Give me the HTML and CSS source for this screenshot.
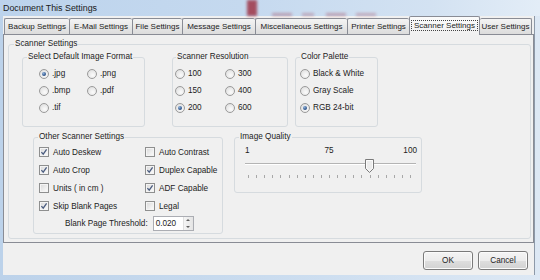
FILE: index.html
```html
<!DOCTYPE html>
<html>
<head>
<meta charset="utf-8">
<title>Document This Settings</title>
<link rel="stylesheet" href="styles.css">
</head>
<body>
<div class="window">
  <div class="titlebar">
    <span class="title">Document This Settings</span>
    <span class="smudge s1"></span>
    <span class="smudge s2"></span>
    <span class="smudge s3"></span>
    <span class="smudge s4"></span>
    <span class="smudge s5"></span>
  </div>
  <div class="client">
    <div class="tabs">
      <div class="tab w1">Backup Settings</div>
      <div class="tab w2">E-Mail Settings</div>
      <div class="tab w3">File Settings</div>
      <div class="tab w4">Message Settings</div>
      <div class="tab w5">Miscellaneous Settings</div>
      <div class="tab w6">Printer Settings</div>
      <div class="tab sel w7"><span class="focus">Scanner Settings</span></div>
      <div class="tab last w8">User Settings</div>
    </div>
    <div class="panel">
      <fieldset class="grp outer">
        <legend>Scanner Settings</legend>
        <div class="row-top">
          <fieldset class="grp fmt">
            <legend>Select Default Image Format</legend>
            <div class="opts c48">
              <label class="opt"><span class="radio on"></span>.jpg</label>
              <label class="opt"><span class="radio"></span>.png</label>
              <label class="opt"><span class="radio"></span>.bmp</label>
              <label class="opt"><span class="radio"></span>.pdf</label>
              <label class="opt"><span class="radio"></span>.tif</label>
            </div>
          </fieldset>
          <fieldset class="grp res">
            <legend>Scanner Resolution</legend>
            <div class="opts c50">
              <label class="opt"><span class="radio"></span>100</label>
              <label class="opt"><span class="radio"></span>300</label>
              <label class="opt"><span class="radio"></span>150</label>
              <label class="opt"><span class="radio"></span>400</label>
              <label class="opt"><span class="radio on"></span>200</label>
              <label class="opt"><span class="radio"></span>600</label>
            </div>
          </fieldset>
          <fieldset class="grp pal">
            <legend>Color Palette</legend>
            <div class="opts c1">
              <label class="opt"><span class="radio"></span>Black &amp; White</label>
              <label class="opt"><span class="radio"></span>Gray Scale</label>
              <label class="opt"><span class="radio on"></span>RGB 24-bit</label>
            </div>
          </fieldset>
        </div>
        <div class="row-bottom">
          <fieldset class="grp other">
            <legend>Other Scanner Settings</legend>
            <div class="checks">
              <label class="opt"><span class="chk"><svg viewBox="0 0 8 8"><path d="M1.4 4.1 L3.2 6.1 L6.6 1.3"/></svg></span>Auto Deskew</label>
              <label class="opt"><span class="chk"></span>Auto Contrast</label>
              <label class="opt"><span class="chk"><svg viewBox="0 0 8 8"><path d="M1.4 4.1 L3.2 6.1 L6.6 1.3"/></svg></span>Auto Crop</label>
              <label class="opt"><span class="chk"><svg viewBox="0 0 8 8"><path d="M1.4 4.1 L3.2 6.1 L6.6 1.3"/></svg></span>Duplex Capable</label>
              <label class="opt"><span class="chk"></span>Units ( in cm )</label>
              <label class="opt"><span class="chk"><svg viewBox="0 0 8 8"><path d="M1.4 4.1 L3.2 6.1 L6.6 1.3"/></svg></span>ADF Capable</label>
              <label class="opt"><span class="chk"><svg viewBox="0 0 8 8"><path d="M1.4 4.1 L3.2 6.1 L6.6 1.3"/></svg></span>Skip Blank Pages</label>
              <label class="opt"><span class="chk"></span>Legal</label>
            </div>
            <div class="threshold">
              <span>Blank Page Threshold:</span>
              <span class="spin">
                <span class="spin-val">0.020</span>
                <span class="spin-btns">
                  <span class="arrow up"></span>
                  <span class="arrow down"></span>
                </span>
              </span>
            </div>
          </fieldset>
          <fieldset class="grp quality">
            <legend>Image Quality</legend>
            <div class="scale">
              <span>1</span>
              <span class="mid">75</span>
              <span class="end">100</span>
            </div>
            <div class="slider">
              <span class="thumb"><svg viewBox="0 0 9 14"><path d="M0.5 0.5 H8.5 V9.5 L4.5 13.5 L0.5 9.5 Z" fill="#ececec" stroke="#7a7a7a"/><path d="M1.5 1.5 H7.5 V9 L4.5 12 L1.5 9 Z" fill="none" stroke="#fbfbfb"/></svg></span>
            </div>
            <div class="ticks"></div>
          </fieldset>
        </div>
      </fieldset>
    </div>
    <div class="buttons">
      <button class="btn">OK</button>
      <button class="btn">Cancel</button>
    </div>
  </div>
</div>
</body>
</html>
```
FILE: styles.css
```css
body {
  margin: 0;
  font-family: "Liberation Sans", Arial, sans-serif;
  font-size: 8.2px;
  color: #1c1c1c;
}

.window {
  width: 540px;
  height: 280px;
  display: flex;
  flex-direction: column;
  background: linear-gradient(to right, #bcd2ea, #cddef0 60%, #dde8f4);
  overflow: hidden;
}

/* title bar */
.titlebar {
  height: 16px;
  position: relative;
  background: linear-gradient(to right, #bcd3ec 0%, #c5d9ef 45%, #d3e2f2 80%, #e3edf7 100%);
}
.title {
  display: block;
  padding-left: 3px;
  line-height: 16px;
  font-size: 8.9px;
  color: #1a1a1a;
}
.smudge {
  position: absolute;
  background: #9c2a3c;
  filter: blur(1.6px);
  opacity: 0.7;
}
.s1 { left: 247px; top: 0; width: 10px; height: 16px; opacity: 0.8; }
.s2 { left: 272px; top: 13px; width: 20px; height: 3px; opacity: 0.35; }
.s3 { left: 302px; top: 13px; width: 12px; height: 3px; opacity: 0.3; }
.s4 { left: 326px; top: 13px; width: 20px; height: 3px; opacity: 0.35; }
.s5 { left: 356px; top: 13px; width: 20px; height: 3px; opacity: 0.3; }

/* client area */
.client {
  flex: 1;
  margin: 0 5px 5px 3px;
  background: #f0f0f0;
  border-right: 1px solid #8d99a8;
  display: flex;
  flex-direction: column;
}

/* tabs */
.tabs {
  height: 18px;
  display: flex;
  align-items: flex-end;
  padding-left: 1px;
  font-size: 8px;
}
.tab {
  box-sizing: border-box;
  height: 16px;
  line-height: 15px;
  text-align: center;
  white-space: nowrap;
  border: 1px solid #898c95;
  border-right: none;
  border-bottom: none;
  border-radius: 2px 2px 0 0;
  background: linear-gradient(#f4f4f4, #e8e8e8 50%, #dcdcdc);
}
.tab.last { border-right: 1px solid #898c95; }
.tab.sel {
  height: 19px;
  margin-bottom: -1px;
  position: relative;
  z-index: 1;
  border-right: 1px solid #898c95;
  background: linear-gradient(#fbfbfb, #f0f0f0);
  line-height: 17px;
}
.tab.sel + .tab { border-left: none; }
.focus {
  outline: 1px dotted #444;
  outline-offset: 0;
  padding: 0 2px;
}
.w1 { width: 65px; }
.w2 { width: 63px; }
.w3 { width: 50px; }
.w4 { width: 73px; }
.w5 { width: 92px; }
.w6 { width: 62px; }
.w7 { width: 71px; }
.w8 { width: 52px; }

/* panel */
.panel {
  box-sizing: border-box;
  height: 209px;
  border: 1px solid #898c95;
  background: #f0f0f0;
  padding: 4px 0 0 4px;
}

/* group boxes */
.grp {
  margin: 0;
  padding: 0;
  min-width: 0;
  box-sizing: border-box;
  border: 1px solid #d6dbdf;
  border-radius: 3px;
}
.grp > legend {
  padding: 0 1px;
  margin-left: 4px;
  height: 10px;
  line-height: 10px;
}
.outer {
  width: 523px;
  height: 200px;
}
.outer > legend { margin-left: 5px; }

.row-top {
  display: flex;
  margin: 3px 0 0 13px;
}
.fmt { width: 123px; height: 75px; }
.res { width: 116px; height: 75px; margin-left: 27px; }
.res > legend { margin-left: 3px; }
.pal { width: 83px; height: 75px; margin-left: 7px; }

.opts {
  display: grid;
  grid-auto-rows: 17px;
  padding-top: 3px;
}
.c48 { grid-template-columns: 48px auto; padding-left: 16px; }
.c50 { grid-template-columns: 50px auto; padding-left: 2px; }
.c1 { grid-template-columns: auto; padding-left: 4px; }

.opt {
  display: flex;
  align-items: center;
  gap: 3px;
  white-space: nowrap;
}

.radio {
  flex: none;
  box-sizing: border-box;
  width: 10px;
  height: 10px;
  border-radius: 50%;
  border: 1px solid #9a9a9a;
  background: radial-gradient(circle at 60% 65%, #fbfbfb 0%, #e9e9e9 55%, #d6d6d6 100%);
  position: relative;
}
.radio.on::after {
  content: "";
  position: absolute;
  left: 2px;
  top: 2px;
  width: 4px;
  height: 4px;
  border-radius: 50%;
  background: radial-gradient(circle at 35% 30%, #8fb3dc, #2a4f86 70%, #1c355e);
}

.row-bottom {
  display: flex;
  margin: 5px 0 0 24px;
}
.other { width: 190px; height: 102px; }
.quality { width: 188px; height: 61px; margin-left: 11px; }

.checks {
  display: grid;
  grid-template-columns: 106px auto;
  grid-auto-rows: 18px;
  padding: 1px 0 0 5px;
}
.checks .opt { gap: 4px; }
.chk {
  flex: none;
  box-sizing: border-box;
  width: 10px;
  height: 10px;
  border: 1px solid #8e8f8f;
  background: linear-gradient(135deg, #d8d8d8, #f6f6f6 80%);
  box-shadow: inset 0 0 0 1px #f4f4f4;
  display: flex;
  align-items: center;
  justify-content: center;
}
.chk svg {
  width: 8px;
  height: 8px;
  fill: none;
  stroke: #4b5d80;
  stroke-width: 1.3;
}

.threshold {
  height: 17px;
  display: flex;
  align-items: center;
  gap: 5px;
  padding-left: 31px;
}
.spin {
  box-sizing: border-box;
  width: 41px;
  height: 15px;
  border: 1px solid #abadb3;
  background: #fff;
  display: flex;
  align-items: center;
  justify-content: space-between;
  padding-left: 2px;
}
.spin-btns {
  width: 9px;
  height: 13px;
  display: flex;
  flex-direction: column;
  border-left: 1px solid #e0e0e0;
  background: linear-gradient(to right, #f5f5f5, #e4e4e4);
}
.arrow {
  flex: 1;
  display: flex;
  align-items: center;
  justify-content: center;
}
.arrow::before {
  content: "";
  border-left: 2px solid transparent;
  border-right: 2px solid transparent;
}
.arrow.up::before { border-bottom: 2px solid #606060; }
.arrow.down::before { border-top: 2px solid #606060; }

/* image quality slider */
.scale {
  display: grid;
  grid-template-columns: 1fr auto 1fr;
  height: 16px;
  align-items: center;
  padding: 0 4px 0 10px;
}
.scale .mid { margin-right: 4px; }
.scale .end { text-align: right; }
.slider {
  position: relative;
  height: 16px;
  margin: 0 5px 0 10px;
}
.slider::before {
  content: "";
  position: absolute;
  left: 0;
  right: 0;
  top: 5px;
  height: 1px;
  background: #b4b4b4;
  box-shadow: 0 1px 0 #ffffff;
}
.thumb {
  position: absolute;
  left: 120px;
  top: 1px;
  width: 9px;
  height: 14px;
}
.thumb svg { display: block; width: 9px; height: 14px; }
.ticks {
  height: 3px;
  width: 164px;
  margin: 1px 0 0 13px;
  background: repeating-linear-gradient(to right, #a8a8a8 0 1px, transparent 1px 8.1px);
}

/* dialog buttons */
.buttons {
  display: flex;
  justify-content: flex-end;
  gap: 5px;
  margin-top: 8px;
  padding-right: 6px;
}
.btn {
  box-sizing: border-box;
  width: 50px;
  height: 19px;
  padding: 0;
  font-family: inherit;
  font-size: 8.2px;
  color: #1c1c1c;
  border: 1px solid #7a7a7a;
  border-radius: 3px;
  background: linear-gradient(#f4f4f4 0%, #ececec 50%, #dedede 51%, #d2d2d2 100%);
  box-shadow: inset 0 0 0 1px #fbfbfb;
}
```
